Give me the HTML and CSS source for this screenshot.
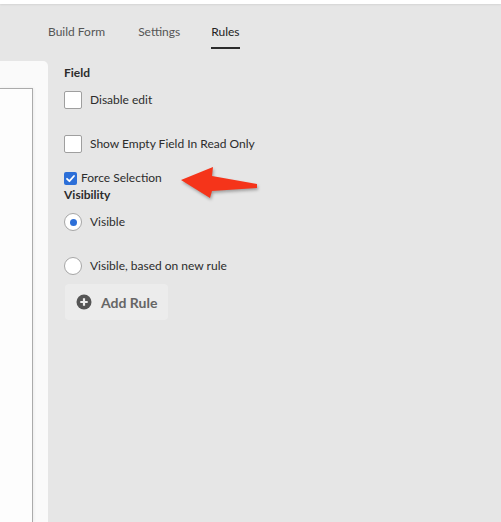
FILE: index.html
```html
<!DOCTYPE html>
<html>
<head>
<meta charset="utf-8">
<link rel="stylesheet" href="styles.css">
</head>
<body>
<div class="topbar"></div>
<nav class="tabs">
  <span class="tab">Build Form</span>
  <span class="tab">Settings</span>
  <span class="tab active">Rules</span>
</nav>
<main class="main">
  <aside class="canvas">
    <div class="canvas-inner"></div>
  </aside>
  <section class="rules">
    <h3 class="heading">Field</h3>
    <label class="row row-disable"><span class="box"></span><span>Disable edit</span></label>
    <label class="row row-empty"><span class="box"></span><span>Show Empty Field In Read Only</span></label>
    <label class="row row-force"><span class="box small checked"><svg viewBox="0 0 13 13" width="13" height="13"><path d="M3 6.8 L5.4 9.2 L10 4" fill="none" stroke="#fff" stroke-width="1.8" stroke-linecap="round" stroke-linejoin="round"/></svg></span><span>Force Selection</span></label>
    <h3 class="heading heading-vis">Visibility</h3>
    <label class="row row-radio1"><span class="radio checked"></span><span>Visible</span></label>
    <label class="row row-radio2"><span class="radio"></span><span>Visible, based on new rule</span></label>
    <button class="add-rule"><svg viewBox="0 0 16 16" width="16" height="16"><circle cx="8" cy="8" r="7.5" fill="#555"/><path d="M8 4.3v7.4M4.3 8h7.4" stroke="#eee" stroke-width="2.2"/></svg><span>Add Rule</span></button>
  </section>
  <svg class="arrow" viewBox="0 0 90 45" width="90" height="45">
    <polygon points="6,19 38,6 37,15 82,23 82,27 37,30 35,37" fill="#f5341a"/>
  </svg>
</main>
</body>
</html>
```

FILE: styles.css
```css
html, body {
  margin: 0;
  height: 100%;
  overflow: hidden;
}
body {
  background: #e6e6e6;
  font-family: Lato, "Liberation Sans", sans-serif;
  font-size: 12px;
  color: #2c2c2c;
  display: flex;
  flex-direction: column;
}
.topbar {
  height: 4px;
  background: #fff;
  box-shadow: 0 1px 2px rgba(0,0,0,0.08);
  flex: none;
}
.tabs {
  display: flex;
  gap: 33px;
  padding: 20px 0 0 48px;
  height: 37px;
  flex: none;
}
.tab {
  line-height: 16px;
  height: 16px;
  padding-bottom: 7px;
  color: #555;
}
.tab.active {
  margin-left: -2px;
  color: #222;
  border-bottom: 2px solid #2c2c2c;
}
.main {
  flex: 1;
  display: flex;
  position: relative;
}
.canvas {
  width: 48px;
  background: #fafafa;
  border-top-right-radius: 5px;
  padding-top: 27px;
  display: flex;
  flex: none;
}
.canvas-inner {
  width: 32px;
  margin-left: -1px;
  background: #fdfdfd;
  border: 1px solid #ababab;
  border-bottom: none;
  box-shadow: 1px 0 3px rgba(0,0,0,0.06);
}
.rules {
  padding: 4px 0 0 16px;
  display: flex;
  flex-direction: column;
  align-items: flex-start;
}
.heading {
  margin: 0;
  font-size: 12px;
  font-weight: 700;
  line-height: 16px;
  color: #2c2c2c;
}
.row {
  display: flex;
  align-items: center;
  gap: 8px;
  line-height: 16px;
}
.box {
  width: 16px;
  height: 16px;
  border: 1px solid #9f9f9f;
  border-radius: 2px;
  background: #fff;
  flex: none;
}
.box.small {
  width: 13px;
  height: 13px;
  border: none;
  border-radius: 2px;
  display: flex;
}
.box.checked {
  background: #2c6fd8;
}
.row-disable { margin-top: 10px; height: 18px; }
.row-empty { margin-top: 26px; height: 18px; }
.row-force { margin-top: 17px; gap: 4px; }
.heading-vis { margin-top: 1px; }
.radio {
  width: 16px;
  height: 16px;
  border: 1px solid #a6a6a6;
  border-radius: 50%;
  background: #fff;
  flex: none;
  display: flex;
  align-items: center;
  justify-content: center;
}
.radio.checked::after {
  content: "";
  width: 7px;
  height: 7px;
  border-radius: 50%;
  background: #2c6fd8;
}
.row-radio1 { margin-top: 10px; height: 18px; }
.row-radio2 { margin-top: 26px; height: 18px; }
.add-rule {
  margin: 9px 0 0 1px;
  height: 36px;
  width: 103px;
  border: none;
  border-radius: 4px;
  background: #ececec;
  display: flex;
  align-items: center;
  gap: 9px;
  padding: 0 0 0 11px;
  font-family: inherit;
  font-size: 14px;
  font-weight: 700;
  color: #666;
}
.arrow {
  position: absolute;
  left: 175px;
  top: 100px;
  filter: drop-shadow(1px 2px 1.5px rgba(0,0,0,0.3));
}
```
